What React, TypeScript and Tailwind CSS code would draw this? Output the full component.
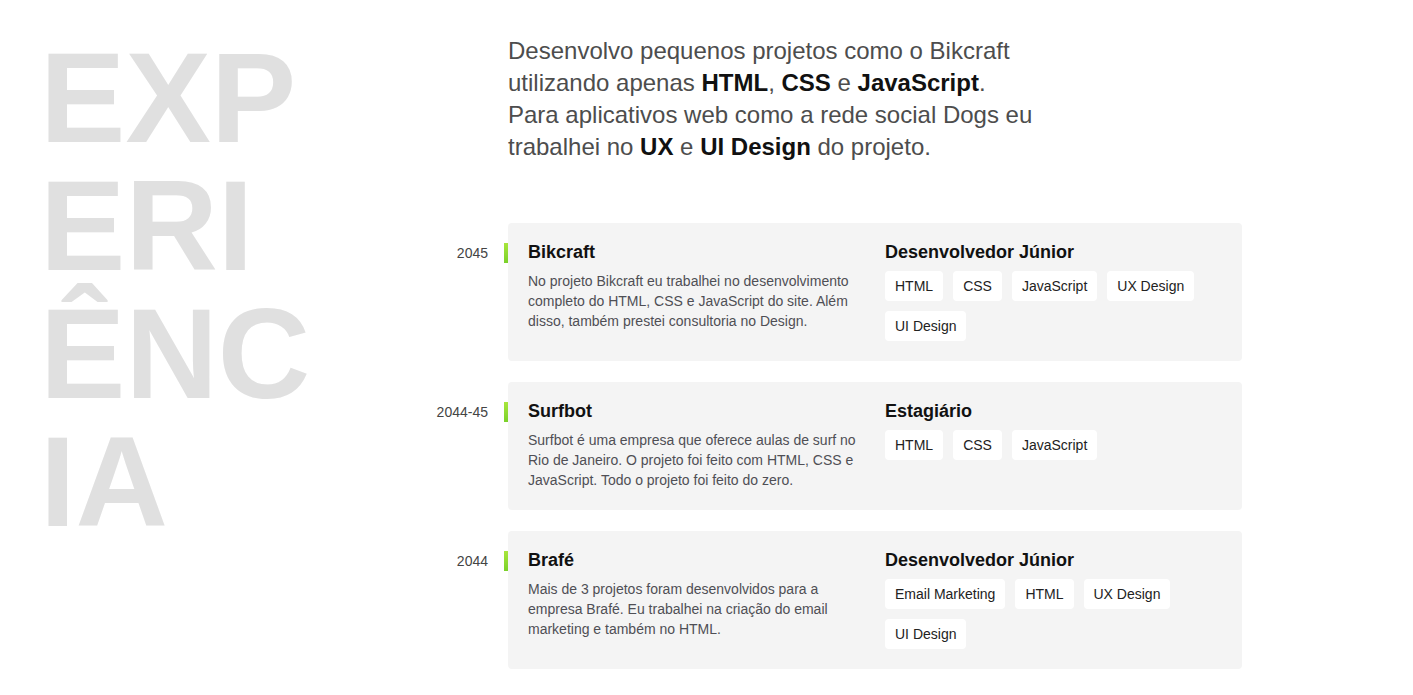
import React from "react";

type Exp = {
  date: string;
  name: string;
  desc: string;
  role: string;
  tags: string[];
};

const items: Exp[] = [
  {
    date: "2045",
    name: "Bikcraft",
    desc: "No projeto Bikcraft eu trabalhei no desenvolvimento completo do HTML, CSS e JavaScript do site. Além disso, também prestei consultoria no Design.",
    role: "Desenvolvedor Júnior",
    tags: ["HTML", "CSS", "JavaScript", "UX Design", "UI Design"],
  },
  {
    date: "2044-45",
    name: "Surfbot",
    desc: "Surfbot é uma empresa que oferece aulas de surf no Rio de Janeiro. O projeto foi feito com HTML, CSS e JavaScript. Todo o projeto foi feito do zero.",
    role: "Estagiário",
    tags: ["HTML", "CSS", "JavaScript"],
  },
  {
    date: "2044",
    name: "Brafé",
    desc: "Mais de 3 projetos foram desenvolvidos para a empresa Brafé. Eu trabalhei na criação do email marketing e também no HTML.",
    role: "Desenvolvedor Júnior",
    tags: ["Email Marketing", "HTML", "UX Design", "UI Design"],
  },
];

export default function App() {
  return (
    <div
      className="min-h-[695px] bg-white pt-[34px] pl-[40px] flex"
      style={{ fontFamily: '"Liberation Sans", Arial, sans-serif' }}
    >
      <div className="w-[360px] shrink-0">
        <h1 className="w-[285px] break-all text-[128px] leading-[128px] font-bold text-[#e0e0e0]">
          EXPERIÊNCIA
        </h1>
      </div>
      <div className="w-[842px]">
        <p className="ml-[108px] w-[530px] pt-px text-[24px] leading-[32px] text-[#4d4d4d]">
          Desenvolvo pequenos projetos como o Bikcraft utilizando apenas{" "}
          <b className="text-[#111]">HTML</b>, <b className="text-[#111]">CSS</b> e{" "}
          <b className="text-[#111]">JavaScript</b>. Para aplicativos web como a rede social Dogs eu
          trabalhei no <b className="text-[#111]">UX</b> e <b className="text-[#111]">UI Design</b> do
          projeto.
        </p>
        <div className="mt-[60px] flex flex-col gap-[21px]">
          {items.map((it) => (
            <div key={it.name} className="flex">
              <div className="w-[108px] shrink-0 flex justify-end items-start pt-5">
                <span className="text-[14px] leading-[18px] text-[#444] mt-[1px]">{it.date}</span>
                <span className="ml-4 w-1 h-5 bg-linear-to-b from-[#a8e63c] to-[#7ad12a]" />
              </div>
              <div className="w-[734px] bg-[#f4f4f4] rounded p-5 grid grid-cols-2 gap-5">
                <div>
                  <h2 className="text-[18px] leading-[18px] font-bold text-[#111] mb-[10px]">
                    {it.name}
                  </h2>
                  <p className="text-[14px] leading-[20px] text-[#4f4f55]">{it.desc}</p>
                </div>
                <div>
                  <h3 className="text-[18px] leading-[18px] font-bold text-[#111] mb-[10px]">
                    {it.role}
                  </h3>
                  <div className="flex flex-wrap gap-[10px] mt-px">
                    {it.tags.map((t) => (
                      <span
                        key={t}
                        className="h-[30px] px-[10px] bg-white rounded flex items-center text-[14px] text-[#222]"
                      >
                        {t}
                      </span>
                    ))}
                  </div>
                </div>
              </div>
            </div>
          ))}
        </div>
      </div>
    </div>
  );
}
